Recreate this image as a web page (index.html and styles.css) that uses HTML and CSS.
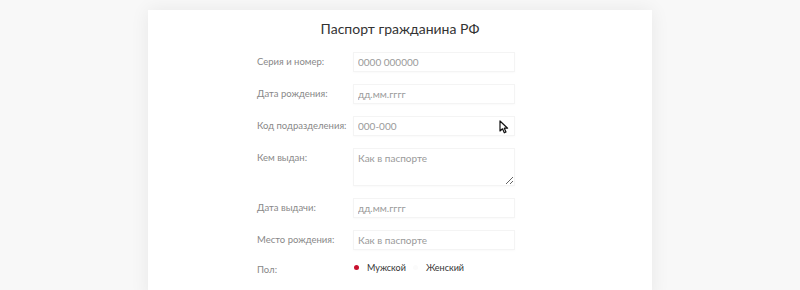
FILE: index.html
```html
<!DOCTYPE html>
<html lang="ru">
<head>
    <meta charset="UTF-8">
    <title>Паспорт гражданина РФ</title>
    <link rel="stylesheet" href="styles.css">
</head>
<body>
    <div class="card">
        <h1>Паспорт гражданина РФ</h1>
        <div class="form">
            <label class="label">Серия и номер:</label>
            <div class="field"><input type="text" placeholder="0000 000000"></div>

            <label class="label">Дата рождения:</label>
            <div class="field"><input type="text" placeholder="дд.мм.гггг"></div>

            <label class="label">Код подразделения:</label>
            <div class="field">
                <input type="text" placeholder="000-000">
                <svg class="cursor" width="10" height="14" viewBox="0 0 10 14">
                    <path d="M1 1 L1 11 L3.5 8.8 L5.3 12.8 L7 12 L5.3 8.2 L8.6 8.2 Z" fill="#fff" stroke="#111" stroke-width="1.2" stroke-linejoin="round"/>
                </svg>
            </div>

            <label class="label">Кем выдан:</label>
            <div class="field"><textarea placeholder="Как в паспорте"></textarea></div>

            <label class="label">Дата выдачи:</label>
            <div class="field"><input type="text" placeholder="дд.мм.гггг"></div>

            <label class="label">Место рождения:</label>
            <div class="field"><input type="text" placeholder="Как в паспорте"></div>

            <label class="label label-sex">Пол:</label>
            <div class="radios">
                <span class="radio"><span class="dot checked"></span>Мужской</span>
                <span class="radio"><span class="dot"></span>Женский</span>
            </div>
        </div>
    </div>
</body>
</html>
```

FILE: styles.css
```css
body {
    font-family: Lato, "Open Sans", sans-serif;
    background-color: #f8f8f8;
    color: #333;
    margin: 0;
    height: 290px;
    overflow: hidden;
}

.card {
    width: 504px;
    height: 290px;
    margin: 10px auto 0 auto;
    background-color: #fff;
    box-shadow: 0 0 18px rgba(0, 0, 0, 0.07);
    padding-top: 7px;
    box-sizing: border-box;
}

h1 {
    margin: 0;
    font-size: 14px;
    font-weight: 400;
    line-height: 24px;
    text-align: center;
    color: #333;
}

.form {
    margin: 11px 0 0 109px;
    width: 258px;
    display: grid;
    grid-template-columns: 96px 162px;
    row-gap: 12px;
}

.label {
    font-size: 9.5px;
    line-height: 20px;
    color: #888;
    white-space: nowrap;
}

.field {
    position: relative;
}

input, textarea {
    display: block;
    width: 100%;
    box-sizing: border-box;
    border: 1px solid #f4f4f4;
    box-shadow: 0 1px 2px rgba(0, 0, 0, 0.025);
    font-family: Lato, "Open Sans", sans-serif;
    font-size: 10px;
    color: #333;
    padding: 0 4px;
    margin: 0;
    outline: none;
}

input {
    height: 20px;
}

textarea {
    height: 38px;
    padding-top: 3px;
    resize: vertical;
}

input::placeholder, textarea::placeholder {
    color: #9a9a9a;
}

.cursor {
    position: absolute;
    left: 146px;
    top: 4px;
}

.label-sex {
    line-height: 16px;
}

.radios {
    display: flex;
    align-items: center;
    gap: 6px;
    font-size: 9px;
    color: #333;
    height: 14px;
    margin-top: -2px;
}

.radio {
    display: flex;
    align-items: center;
    gap: 8px;
}

.dot {
    width: 5px;
    height: 5px;
    border-radius: 50%;
    margin-left: 1px;
    background-color: #fbfbfb;
}

.dot.checked {
    background-color: #c8102e;
}
```
